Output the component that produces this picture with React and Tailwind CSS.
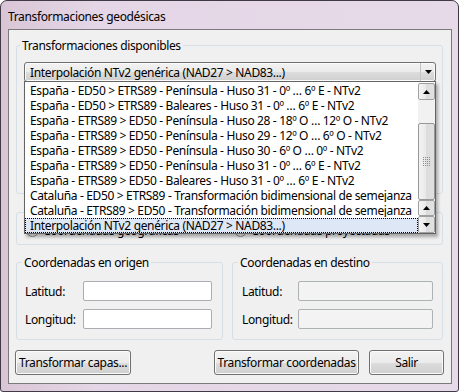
import React from "react";

const rows = [
  "España - ED50 > ETRS89 - Península - Huso 31 - 0º … 6º E - NTv2",
  "España - ED50 > ETRS89 - Baleares - Huso 31 - 0º … 6º E - NTv2",
  "España - ETRS89 > ED50 - Península - Huso 28 - 18º O … 12º O - NTv2",
  "España - ETRS89 > ED50 - Península - Huso 29 - 12º O … 6º O - NTv2",
  "España - ETRS89 > ED50 - Península - Huso 30 - 6º O … 0º - NTv2",
  "España - ETRS89 > ED50 - Península - Huso 31 - 0º … 6º E - NTv2",
  "España - ETRS89 > ED50 - Baleares - Huso 31 - 0º … 6º E - NTv2",
  "Cataluña - ED50 > ETRS89 - Transformación bidimensional de semejanza",
  "Cataluña - ETRS89 > ED50 - Transformación bidimensional de semejanza",
  "Interpolación NTv2 genérica (NAD27 > NAD83...)",
];

const face =
  "rounded-[3px] border border-[#707070] bg-[linear-gradient(to_bottom,#f2f2f2,#ebebeb_50%,#dddddd_50%,#cfcfcf)] shadow-[inset_0_0_0_1px_#fbfbfb]";

function Button({ w, className = "", children }) {
  return (
    <div className={`${face} ${w} ${className} flex h-[25px] items-center justify-center whitespace-nowrap`}>
      {children}
    </div>
  );
}

function Arrow({ up }) {
  return (
    <svg width="7" height="4" viewBox="0 0 7 4">
      <path d={up ? "M0 4L3.5 0L7 4Z" : "M0 0L7 0L3.5 4Z"} fill="#000" />
    </svg>
  );
}

function ScrollBtn({ up, h }) {
  return (
    <div
      className={`${h} flex items-center justify-center rounded-[2px] border border-[#a0a0a0] bg-[linear-gradient(to_right,#f4f4f4,#e9e9e9_50%,#dcdcdc_50%,#e2e2e2)]`}
    >
      <Arrow up={up} />
    </div>
  );
}

function Field({ label, labelW, inputW, disabled }) {
  return (
    <div className="flex items-center">
      <span className={labelW}>{label}</span>
      <div
        className={`${inputW} h-[20px] rounded-[2px] border ${
          disabled ? "border-[#adb2b5] bg-[#f3f3f3]" : "border-[#abadb3] bg-white"
        }`}
      />
    </div>
  );
}

function Radio({ label, className = "" }) {
  return (
    <div className={`flex items-center gap-[4px] ${className}`}>
      <div className="h-[13px] w-[13px] rounded-full border border-[#8e8f8f] bg-[linear-gradient(135deg,#dcdcdc,#fbfbfb)]" />
      <span>{label}</span>
    </div>
  );
}

export default function App() {
  return (
    <div className="h-[392px] w-[459px] overflow-hidden bg-white">
      <div className="flex h-full flex-col rounded-t-[7px] rounded-b-[3px] border border-[#3f3a44] bg-[linear-gradient(to_right,#d9c5d6,#e4d6e6_20%,#e6d9e8)] font-['Noto_Sans',sans-serif] text-[12px] leading-[17px] tracking-[-0.35px] text-black">
        <div className="h-[28px] pl-[7px] pt-[7px]">Transformaciones geodésicas</div>

        <div className="relative mb-[7px] ml-[7px] mr-[6px] flex flex-1 flex-col border border-[#7a7a7a] bg-[#f0f0f0] pt-[7px]">
          <fieldset className="ml-[7px] mr-[8px] h-[157px] rounded-[3px] border border-[#d5dfe5]">
            <legend className="ml-[3px] px-[2px]">Transformaciones disponibles</legend>
            <div className={`${face} ml-[7px] mr-[6px] mt-[8px] flex h-[20px] items-center justify-between`}>
              <span className="whitespace-nowrap pl-[5px]">
                Interpolación NTv2 genérica (NAD27 &gt; NAD83...)
              </span>
              <div className="flex h-full w-[15px] items-center justify-center border-l border-[#c4c4c4]">
                <Arrow />
              </div>
            </div>
          </fieldset>

          <div className="ml-[7px] mr-[8px] mt-[18px] flex h-[33px] items-center rounded-[3px] border border-[#d5dfe5] pt-[3px]">
            <Radio label="Coordenadas geográficas" className="ml-[9px] w-[208px]" />
            <Radio label="Coordenadas proyectadas" />
          </div>

          <div className="ml-[7px] mr-[8px] mt-[9px] flex gap-[9px]">
            <fieldset className="h-[86px] w-[207px] rounded-[3px] border border-[#d5dfe5]">
              <legend className="ml-[5px] px-[2px]">Coordenadas en origen</legend>
              <div className="mt-[10px] flex flex-col gap-[8px] pl-[8px]">
                <Field label="Latitud:" labelW="w-[58px]" inputW="w-[129px]" />
                <Field label="Longitud:" labelW="w-[58px]" inputW="w-[129px]" />
              </div>
            </fieldset>
            <fieldset className="h-[86px] flex-1 rounded-[3px] border border-[#d5dfe5]">
              <legend className="ml-[5px] px-[2px]">Coordenadas en destino</legend>
              <div className="mt-[10px] flex flex-col gap-[8px] pl-[9px]">
                <Field label="Latitud:" labelW="w-[56px]" inputW="w-[135px]" disabled />
                <Field label="Longitud:" labelW="w-[56px]" inputW="w-[135px]" disabled />
              </div>
            </fieldset>
          </div>

          <div className="ml-[6px] mr-[7px] mt-[10px] flex">
            <Button w="w-[116px]">Transformar capas...</Button>
            <Button w="w-[145px]" className="ml-auto">Transformar coordenadas</Button>
            <Button w="w-[75px]" className="ml-[10px]">Salir</Button>
          </div>

          {/* open combo list */}
          <div className="absolute left-[15px] top-[51px] flex h-[153px] w-[412px] border border-[#646464] bg-white pt-[1px] shadow-[2px_3px_3px_rgba(0,0,0,0.3)]">
            <div className="flex min-w-0 flex-1 flex-col">
              {rows.map((r, i) => (
                <div
                  key={i}
                  className={`h-[15px] overflow-hidden whitespace-nowrap pl-[4px] leading-[14px] ${
                    i === rows.length - 1
                      ? "border border-dotted border-black bg-[#dde7f5]"
                      : "border border-transparent"
                  }`}
                >
                  {r}
                </div>
              ))}
            </div>
            <div className="flex w-[17px] flex-col">
              <ScrollBtn up h="h-[17px]" />
              <div className="h-[23px] bg-[#f1f1f1]" />
              <div className="flex h-[77px] items-center justify-center rounded-[2px] border border-[#979797] bg-[linear-gradient(to_right,#f3f3f3,#e8e8e8_50%,#dcdcdc_50%,#e0e0e0)]">
                <div className="grid grid-cols-4 gap-[1px]">
                  {Array.from({ length: 20 }).map((_, i) => (
                    <div key={i} className="h-[1px] w-[1px] bg-[#8c8c8c]" />
                  ))}
                </div>
              </div>
              <ScrollBtn up h="h-[16px]" />
              <ScrollBtn h="h-[17px]" />
            </div>
          </div>
        </div>
      </div>
    </div>
  );
}
